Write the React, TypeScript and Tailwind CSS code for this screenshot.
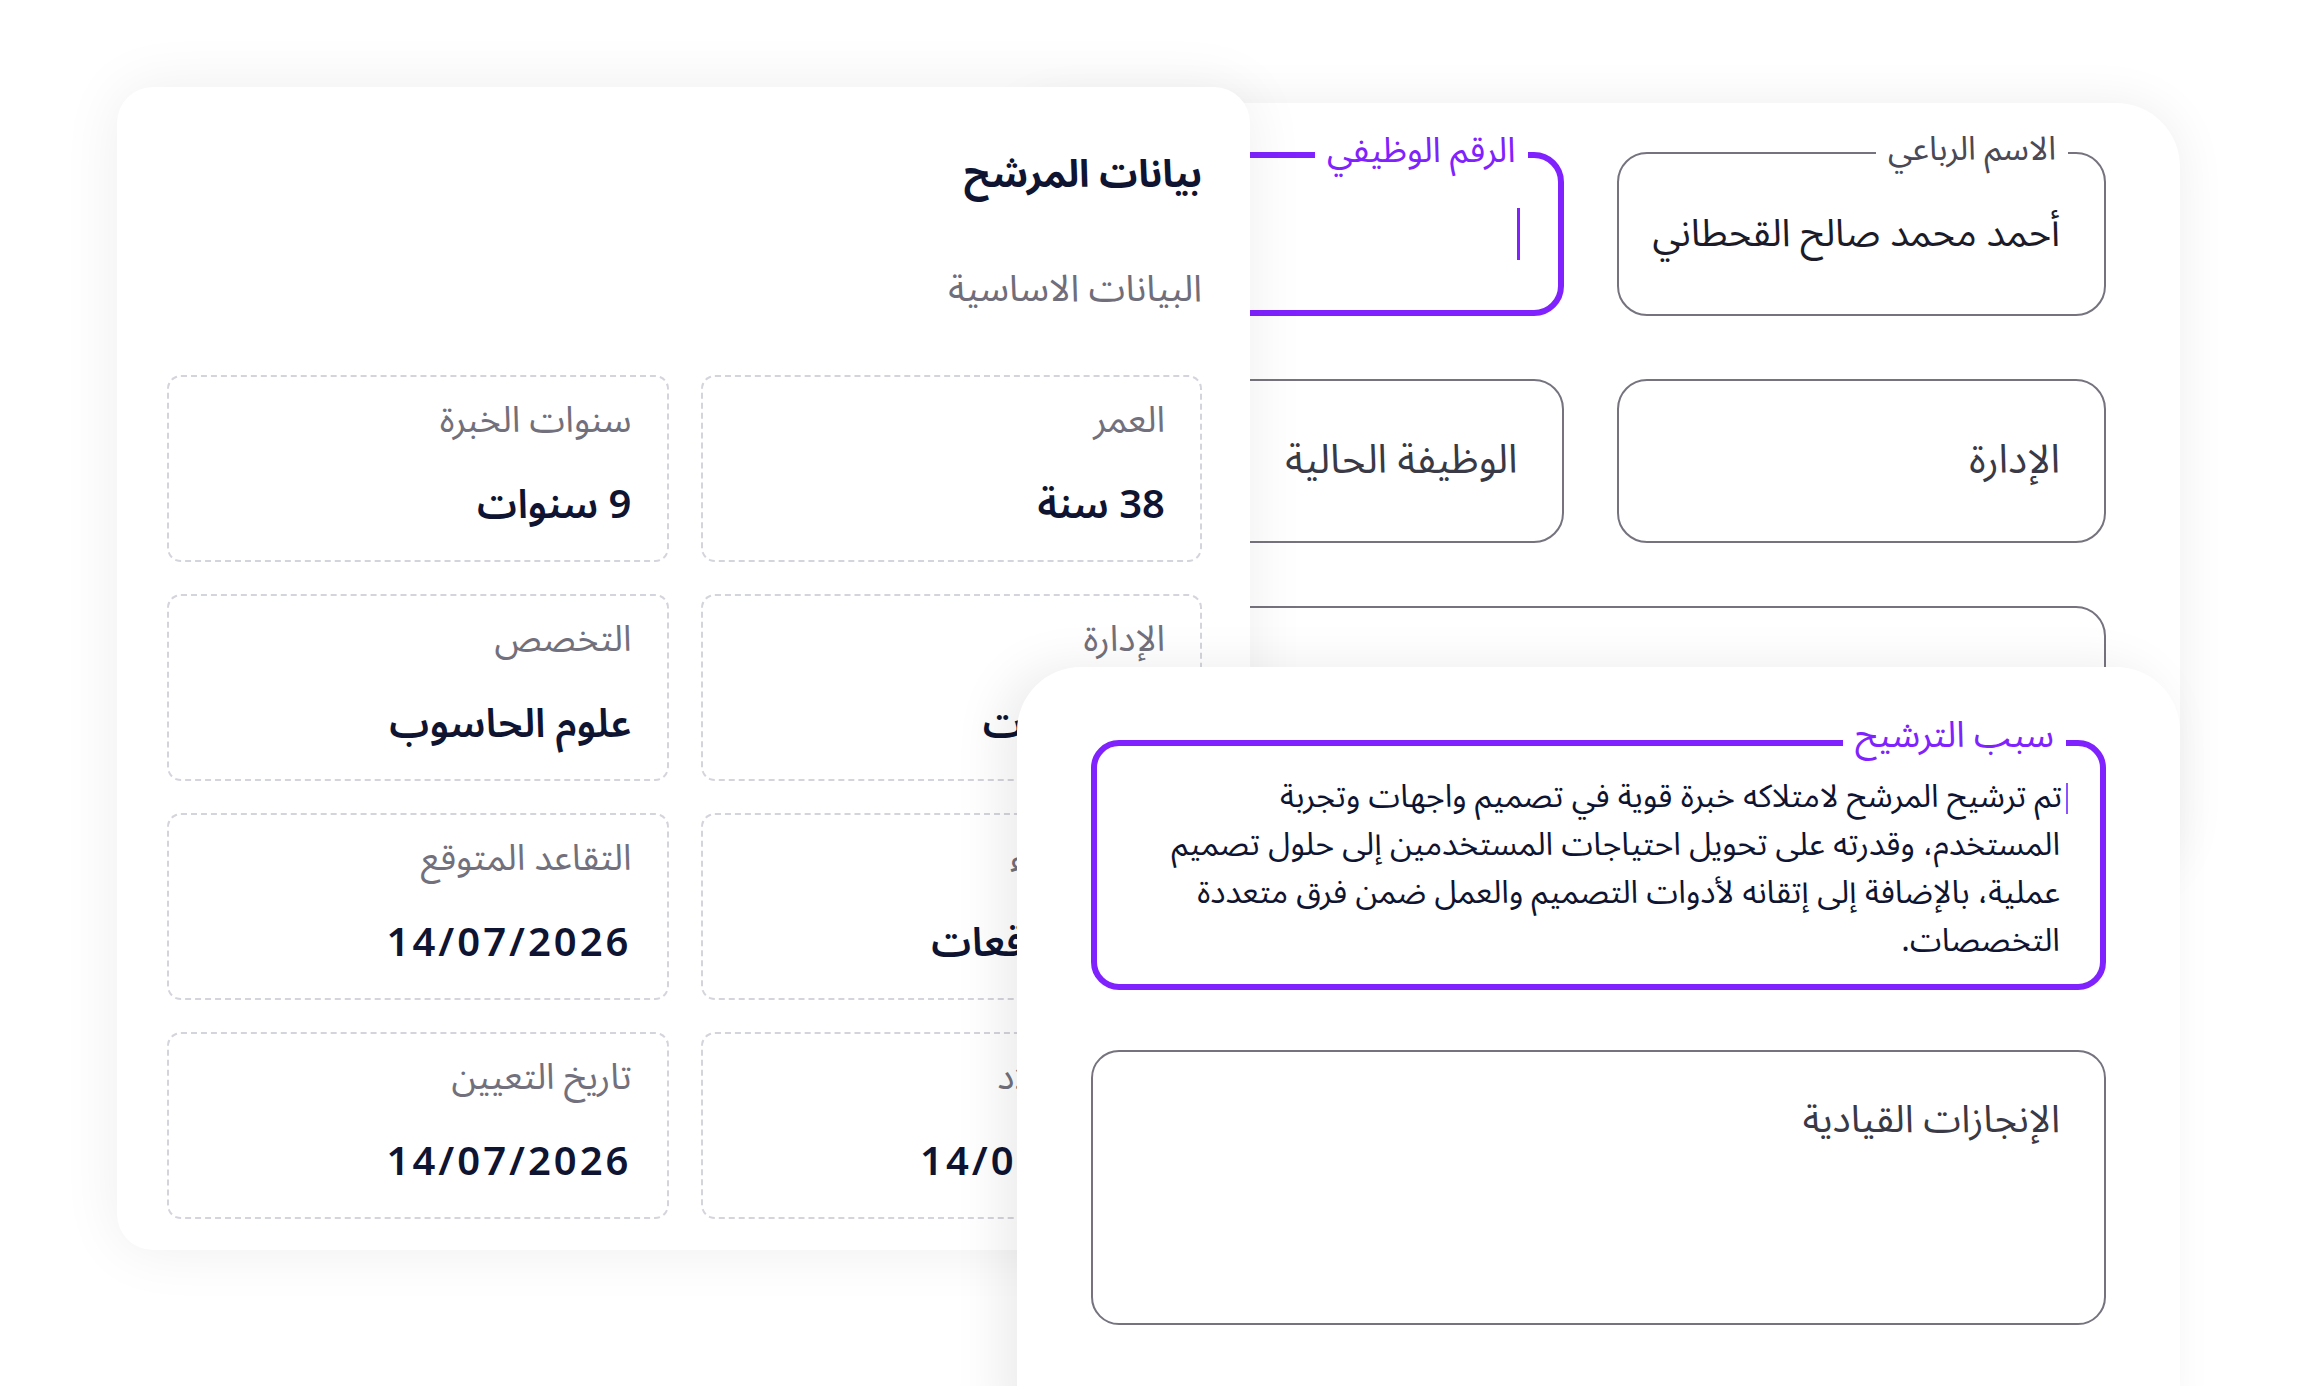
import React from "react";

const info = [
  { label: "العمر", value: "38 سنة" },
  { label: "سنوات الخبرة", value: "9 سنوات" },
  { label: "الإدارة", value: "المشتريات" },
  { label: "التخصص", value: "علوم الحاسوب" },
  { label: "تقييم الأداء", value: "فوق التوقعات" },
  { label: "التقاعد المتوقع", value: "14/07/2026", date: true },
  { label: "تاريخ الميلاد", value: "14/07/1988", date: true },
  { label: "تاريخ التعيين", value: "14/07/2026", date: true },
];

const reasonLines = [
  "تم ترشيح المرشح لامتلاكه خبرة قوية في تصميم واجهات وتجربة",
  "المستخدم، وقدرته على تحويل احتياجات المستخدمين إلى حلول تصميم",
  "عملية، بالإضافة إلى إتقانه لأدوات التصميم والعمل ضمن فرق متعددة",
  "التخصصات.",
];

export default function App() {
  return (
    <div className="relative w-full h-[1386px] overflow-hidden bg-white font-['Noto_Sans_Arabic','DejaVu_Sans',sans-serif]">
      {/* Back card: form fields */}
      <div
        dir="rtl"
        className="absolute left-[1000px] top-[103px] z-0 w-[1180px] h-[780px] rounded-[64px] bg-white shadow-[0_0_50px_rgba(0,0,0,0.07)] pt-[49px] px-[74px]"
      >
        <div className="grid grid-cols-2 gap-x-[53px] gap-y-[63px]">
          {/* Full name */}
          <div className="relative h-[164px] rounded-[30px] border-2 border-[#76737f] flex items-center pr-[44px] pl-[24px]">
            <span className="absolute -top-[26px] right-[36px] bg-white px-[12px] text-[33px] leading-[44px] text-[#4a4955]">
              الاسم الرباعي
            </span>
            <span className="whitespace-nowrap text-[38px] text-[#1c1b29]">أحمد محمد صالح القحطاني</span>
          </div>

          {/* Job number (focused) */}
          <div className="relative h-[164px] rounded-[30px] border-[6px] border-violet-600 flex items-center px-[38px]">
            <span className="absolute -top-[29px] right-[30px] bg-white px-[12px] text-[35px] leading-[44px] text-violet-600">
              الرقم الوظيفي
            </span>
            <span className="w-[3px] h-[52px] bg-violet-600" />
          </div>

          <div className="h-[164px] rounded-[30px] border-2 border-[#76737f] flex items-center px-[44px]">
            <span className="text-[40px] text-[#3a3946]">الإدارة</span>
          </div>

          <div className="h-[164px] rounded-[30px] border-2 border-[#76737f] flex items-center px-[44px]">
            <span className="text-[40px] text-[#3a3946]">الوظيفة الحالية</span>
          </div>

          <div className="col-span-2 h-[164px] rounded-[30px] border-2 border-[#76737f]" />
        </div>
      </div>

      {/* Candidate data card */}
      <div
        dir="rtl"
        className="absolute left-[117px] top-[87px] z-10 w-[1133px] h-[1163px] rounded-[36px] bg-white shadow-[0_0_60px_rgba(0,0,0,0.07)] pt-[60px] pr-[48px] pl-[50px] flex flex-col"
      >
        <h1 className="text-[38px] font-bold leading-[56px] text-[#0e1431]">بيانات المرشح</h1>
        <p className="mt-[64px] text-[37px] leading-[44px] text-[#6f6e7a]">البيانات الاساسية</p>

        <div className="mt-[64px] grid grid-cols-2 gap-[32px]">
          {info.map((item) => (
            <div
              key={item.label}
              className="h-[187px] rounded-[14px] border-2 border-dashed border-[#d4d4dc] pt-[22px] pb-[24px] px-[35px] flex flex-col justify-between"
            >
              <span className="text-[36px] leading-[45px] text-[#72707c]">{item.label}</span>
              <span
                className={
                  item.date
                    ? "text-[40px] leading-[60px] font-semibold tracking-[3px] text-[#0e1431]"
                    : "text-[40px] leading-[60px] font-semibold text-[#0e1431]"
                }
              >
                {item.value}
              </span>
            </div>
          ))}
        </div>
      </div>

      {/* Front card: nomination reason */}
      <div
        dir="rtl"
        className="absolute left-[1017px] top-[667px] z-20 w-[1163px] h-[760px] rounded-t-[64px] bg-white shadow-[-16px_0_50px_rgba(0,0,0,0.08)] pt-[73px] px-[74px]"
      >
        <div className="relative h-[250px] rounded-[28px] border-[6px] border-violet-600 pt-[27px] pr-[40px] pl-[30px]">
          <span className="absolute -top-[34px] right-[34px] bg-white px-[12px] text-[36px] leading-[48px] text-violet-600">
            سبب الترشيح
          </span>
          <div className="text-[32px] leading-[48px] text-[#0e1431]">
            {reasonLines.map((line, i) => (
              <div key={i} className="whitespace-nowrap">
                {i === 0 && (
                  <span className="inline-block align-middle w-[2px] h-[31px] bg-violet-500 -mr-[8px] ml-[4px]" />
                )}
                {line}
              </div>
            ))}
          </div>
        </div>

        <div className="mt-[60px] h-[275px] rounded-[28px] border-2 border-[#76737f] pt-[44px] pr-[44px]">
          <span className="text-[38px] leading-[48px] text-[#3a3946]">الإنجازات القيادية</span>
        </div>
      </div>
    </div>
  );
}
